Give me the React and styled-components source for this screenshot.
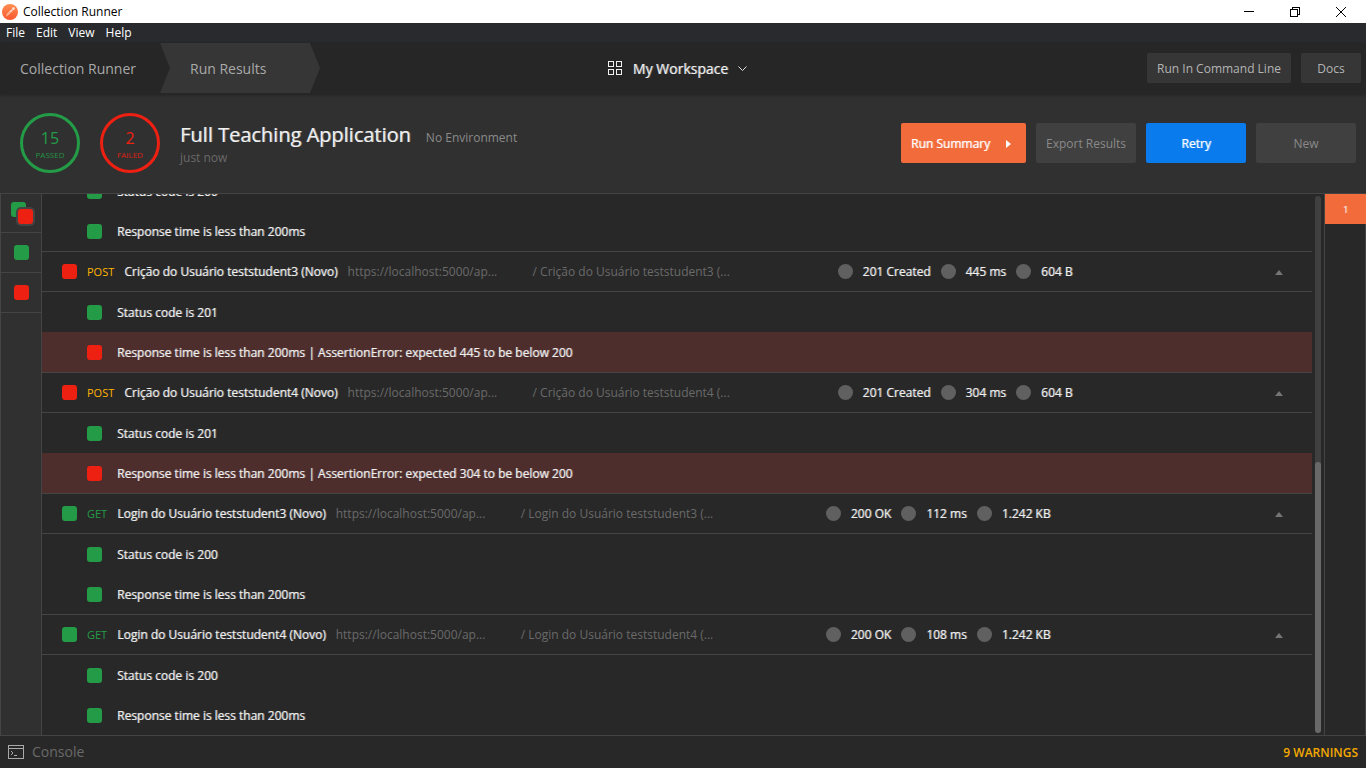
import React from "react";
import styled, { createGlobalStyle, css } from "styled-components";

const GREEN = "#249c47";
const RED = "#ed2012";
const ORANGE = "#f26b3a";
const LINE = "#444444";

const GlobalStyle = createGlobalStyle`
  *, *::before, *::after { box-sizing: border-box; }
  body {
    margin: 0;
    background: #282828;
    color: #f0f0f0;
    font-family: "Open Sans", "Noto Sans", sans-serif;
    font-size: 12px;
    line-height: 20px;
  }
  button { font: inherit; color: inherit; border: 0; padding: 0; background: none; }
  h1, p, ul { margin: 0; padding: 0; font-weight: 400; }
  ul { list-style: none; }
`;

/* Strengthens the regular weight without changing its width. */
const strong = css`
  text-shadow: 1px 0 rgba(255, 255, 255, 0.45);
`;

const Window = styled.div`
  display: flex;
  flex-direction: column;
  height: 100vh;
  overflow: hidden;
`;

const TitleBar = styled.div`
  display: flex;
  align-items: center;
  flex: none;
  height: 23px;
  padding: 0 2px;
  gap: 5px;
  background: #fff;
  color: #000;
`;

const WindowControls = styled.div`
  display: flex;
  margin-left: auto;
`;

const WindowButton = styled.button`
  display: flex;
  align-items: center;
  justify-content: center;
  width: 46px;
  height: 20px;
`;

const MenuBar = styled.nav`
  display: flex;
  flex: none;
  height: 20px;
  padding: 0 6px;
  gap: 11px;
  background: #292a2e;
  color: #fff;
`;

const Header = styled.header`
  display: grid;
  grid-template-columns: 1fr auto 1fr;
  flex: none;
  height: 51px;
  background: #262626;
  box-shadow: 0 1px 3px rgba(0, 0, 0, 0.3);
  z-index: 1;
`;

const Tabs = styled.nav`
  display: flex;
  height: 50px;
  font-size: 14px;
  line-height: 52px;
  color: #a9a9a9;
`;

const Tab = styled.button`
  width: 160px;
  padding-left: ${(p) => (p.$active ? 30 : 20)}px;
  text-align: left;
  background: ${(p) => (p.$active ? "#363636" : "transparent")};
  clip-path: ${(p) =>
    p.$active
      ? "polygon(0 0, calc(100% - 10px) 0, 100% 50%, calc(100% - 10px) 100%, 0 100%, 10px 50%)"
      : "none"};
`;

const Workspace = styled.button`
  display: flex;
  align-items: center;
  gap: 10px;
  padding-right: 11px;
  font-size: 14px;
  color: #f0f0f0;
  ${strong}
`;

const HeaderActions = styled.div`
  display: flex;
  align-items: center;
  justify-content: flex-end;
  gap: 10px;
  padding: 0 5px 2px 0;
`;

const HeaderButton = styled.button`
  min-width: 60px;
  height: 30px;
  padding: 2px 10px 0;
  border-radius: 2px;
  background: #363636;
  color: #b4b4b4;
`;

const Summary = styled.section`
  display: flex;
  align-items: center;
  flex: none;
  height: 99px;
  padding: 0 10px 2px 20px;
  gap: 20px;
  background: #303030;
`;

const Counter = styled.div`
  display: flex;
  flex-direction: column;
  align-items: center;
  width: 60px;
  height: 60px;
  padding-top: 12px;
  border: 3px solid ${(p) => p.$color};
  border-radius: 50%;
  color: ${(p) => p.$color};
`;

const Count = styled.span`
  font-size: 16px;
  line-height: 20px;
`;

const CountLabel = styled.span`
  font-size: 8px;
  line-height: 14px;
  opacity: 0.9;
`;

const Heading = styled.div`
  flex: 1;
`;

const HeadingLine = styled.div`
  display: flex;
  align-items: baseline;
  gap: 15px;
`;

const RunName = styled.h1`
  font-size: 20px;
  line-height: 30px;
  ${strong}
`;

const Environment = styled.span`
  color: #8a8a8a;
`;

const RunTime = styled.p`
  line-height: 16px;
  color: #6a6a6a;
`;

const Actions = styled.div`
  display: flex;
  gap: 10px;
`;

const ActionButton = styled.button`
  display: flex;
  align-items: center;
  justify-content: center;
  gap: 16px;
  min-width: ${(p) => (p.$wide ? 125 : 100)}px;
  height: 40px;
  padding-top: 2px;
  border-radius: 2px;
  background: ${(p) => p.$bg || "#404040"};
  color: ${(p) => (p.$bg ? "#fff" : "#8a8a8a")};
  ${(p) => p.$bg && css`text-shadow: 1px 0 rgba(255, 255, 255, 0.55);`}
`;

const Body = styled.main`
  display: flex;
  flex: 1;
  min-height: 0;
  border: solid ${LINE};
  border-width: 1px 0 0 1px;
`;

const Filters = styled.aside`
  flex: none;
  width: 41px;
  border-right: 1px solid ${LINE};
  background: #303030;
`;

const FilterButton = styled.button`
  display: flex;
  align-items: center;
  justify-content: center;
  width: 40px;
  height: ${(p) => (p.$first ? 39 : 40)}px;
  border-bottom: 1px solid ${LINE};
`;

const Square = styled.span`
  flex: none;
  width: 15px;
  height: 15px;
  border-radius: 3px;
  background: ${(p) => (p.$pass ? GREEN : RED)};
`;

const Stacked = styled.span`
  position: relative;
  width: 20px;
  height: 22px;

  ${Square} {
    position: absolute;
    top: 0;
    left: 0;
  }
  ${Square} + ${Square} {
    top: 7px;
    left: 7px;
    box-shadow: 0 0 0 2px ${LINE};
  }
`;

const Results = styled.div`
  display: flex;
  flex-direction: column;
  justify-content: flex-end;
  flex: 1;
  min-width: 0;
  overflow: hidden;
`;

const Request = styled.div`
  display: flex;
  align-items: center;
  flex: none;
  height: 41px;
  padding: 0 29px 0 20px;
  gap: 10px;
  border: solid ${LINE};
  border-width: 1px 0;
`;

const Method = styled.span`
  font-size: 11px;
  color: ${(p) => (p.$method === "POST" ? "#ffb400" : GREEN)};
`;

const Name = styled.span`
  ${strong}
`;

const Url = styled.span`
  width: 175px;
  color: #6a6a6a;
`;

const Path = styled.span`
  width: 295px;
  color: #6a6a6a;
`;

const Stat = styled.span`
  display: flex;
  align-items: center;
  gap: 10px;
  ${strong}

  &::before {
    content: "";
    width: 15px;
    height: 15px;
    border-radius: 50%;
    background: #606060;
  }
`;

const Collapse = styled.button`
  display: flex;
  margin-left: auto;
  padding-top: 2px;
`;

const Test = styled.li`
  display: flex;
  align-items: center;
  height: 40px;
  padding-left: 45px;
  gap: 15px;
  background: ${(p) => (p.$failed ? "#4e2e2d" : "transparent")};
`;

const TestText = styled.span`
  padding-top: 2px;
  ${strong}
`;

const Scrollbar = styled.div`
  display: flex;
  flex-direction: column;
  justify-content: flex-end;
  flex: none;
  width: 6px;
  margin: 2px 3px;
  border-radius: 3px;
  background: #404040;
`;

const Thumb = styled.div`
  height: calc(50% + 3px);
  border-radius: 3px;
  background: #696969;
`;

const Iterations = styled.aside`
  flex: none;
  width: 42px;
  border: solid ${LINE};
  border-width: 0 1px;
`;

const Iteration = styled.button`
  width: 41px;
  height: 30px;
  padding-top: 2px;
  background: ${ORANGE};
  font-size: 9px;
  ${strong}
`;

const StatusBar = styled.footer`
  display: flex;
  align-items: center;
  justify-content: space-between;
  flex: none;
  height: 33px;
  padding: 0 8px;
  border-top: 1px solid ${LINE};
`;

const ConsoleButton = styled.button`
  display: flex;
  align-items: center;
  gap: 8px;
  font-size: 14px;
  color: #6a6a6a;
`;

const Warnings = styled.span`
  padding-top: 2px;
  font-weight: 600;
  color: #f5aa00;
`;

const okTests = [
  { text: "Status code is 200", pass: true },
  { text: "Response time is less than 200ms", pass: true },
];

const slowTests = (ms) => [
  { text: "Status code is 201", pass: true },
  {
    text: `Response time is less than 200ms | AssertionError: expected ${ms} to be below 200`,
    pass: false,
  },
];

const requests = [
  { method: "POST", name: "Crição do Usuário teststudent3 (Novo)", path: "/ Crição do Usuário teststudent3 (...", stats: ["201 Created", "445 ms", "604 B"], tests: slowTests(445), pass: false },
  { method: "POST", name: "Crição do Usuário teststudent4 (Novo)", path: "/ Crição do Usuário teststudent4 (...", stats: ["201 Created", "304 ms", "604 B"], tests: slowTests(304), pass: false },
  { method: "GET", name: "Login do Usuário teststudent3 (Novo)", path: "/ Login do Usuário teststudent3 (...", stats: ["200 OK", "112 ms", "1.242 KB"], tests: okTests, pass: true },
  { method: "GET", name: "Login do Usuário teststudent4 (Novo)", path: "/ Login do Usuário teststudent4 (...", stats: ["200 OK", "108 ms", "1.242 KB"], tests: okTests, pass: true },
];

function Logo() {
  return (
    <svg width="16" height="16" viewBox="0 0 16 16" aria-hidden="true">
      <defs>
        <linearGradient id="logo" x1="0" y1="0" x2="0" y2="1">
          <stop offset="0" stopColor="#ff8e52" />
          <stop offset="1" stopColor="#f9572f" />
        </linearGradient>
      </defs>
      <circle cx="8" cy="8" r="8" fill="url(#logo)" />
      <path d="M3.700 12.600 5 9.900 9.600 5.300 10.800 6.500 6.200 11.100Z" fill="#ffe3d6" />
      <path d="M4.200 12 8.500 7.700" stroke="#f96a3c" strokeWidth=".6" />
      <circle cx="11.400" cy="4.700" r="1.400" fill="#ffe3d6" />
    </svg>
  );
}

function TestList({ tests }) {
  return (
    <ul>
      {tests.map((t) => (
        <Test key={t.text} $failed={!t.pass}>
          <Square $pass={t.pass} />
          <TestText>{t.text}</TestText>
        </Test>
      ))}
    </ul>
  );
}

export default function App() {
  return (
    <>
      <GlobalStyle />
      <Window>
        <TitleBar>
          <Logo />
          <span>Collection Runner</span>
          <WindowControls>
            <WindowButton aria-label="Minimize">
              <svg width="10" height="10" shapeRendering="crispEdges"><path d="M0 4.500H10" stroke="#000" /></svg>
            </WindowButton>
            <WindowButton aria-label="Restore">
              <svg width="10" height="10" fill="none" stroke="#000" shapeRendering="crispEdges">
                <path d="M.5 2.500h7v7h-7zM2.500 2.500v-2h7v7h-2" />
              </svg>
            </WindowButton>
            <WindowButton aria-label="Close">
              <svg width="10" height="10" stroke="#000" strokeWidth="1"><path d="M0 0 10 10M10 0 0 10" /></svg>
            </WindowButton>
          </WindowControls>
        </TitleBar>
        <MenuBar>
          {["File", "Edit", "View", "Help"].map((m) => <button key={m}>{m}</button>)}
        </MenuBar>
        <Header>
          <Tabs>
            <Tab>Collection Runner</Tab>
            <Tab $active>Run Results</Tab>
          </Tabs>
          <Workspace>
            <svg width="15" height="15" fill="none" stroke="#f0f0f0" shapeRendering="crispEdges">
              <path d="M.5 .5h5v5h-5zM8.500 .5h5v5h-5zM.5 8.500h5v5h-5zM8.500 8.500h5v5h-5z" />
            </svg>
            My Workspace
            <svg width="9" height="6" fill="none" stroke="#e0e0e0"><path d="M.5 .5 4.500 4.500 8.500 .5" /></svg>
          </Workspace>
          <HeaderActions>
            <HeaderButton>Run In Command Line</HeaderButton>
            <HeaderButton>Docs</HeaderButton>
          </HeaderActions>
        </Header>
        <Summary>
          <Counter $color={GREEN}><Count>15</Count><CountLabel>PASSED</CountLabel></Counter>
          <Counter $color={RED}><Count>2</Count><CountLabel>FAILED</CountLabel></Counter>
          <Heading>
            <HeadingLine>
              <RunName>Full Teaching Application</RunName>
              <Environment>No Environment</Environment>
            </HeadingLine>
            <RunTime>just now</RunTime>
          </Heading>
          <Actions>
            <ActionButton $wide $bg={ORANGE}>
              Run Summary
              <svg width="10" height="8" fill="#fff"><path d="M0 0 5 4 0 8z" /></svg>
            </ActionButton>
            <ActionButton>Export Results</ActionButton>
            <ActionButton $bg="#097bed">Retry</ActionButton>
            <ActionButton>New</ActionButton>
          </Actions>
        </Summary>
        <Body>
          <Filters>
            <FilterButton $first aria-label="All tests">
              <Stacked><Square $pass /><Square /></Stacked>
            </FilterButton>
            <FilterButton aria-label="Passed tests"><Square $pass /></FilterButton>
            <FilterButton aria-label="Failed tests"><Square /></FilterButton>
          </Filters>
          <Results>
            <TestList tests={okTests} />
            {requests.map((r) => (
              <React.Fragment key={r.name}>
                <Request>
                  <Square $pass={r.pass} />
                  <Method $method={r.method}>{r.method}</Method>
                  <Name>{r.name}</Name>
                  <Url>https://localhost:5000/ap...</Url>
                  <Path>{r.path}</Path>
                  {r.stats.map((s) => <Stat key={s}>{s}</Stat>)}
                  <Collapse aria-label="Collapse">
                    <svg width="8" height="5" fill="#757575"><path d="M4 0 8 5H0z" /></svg>
                  </Collapse>
                </Request>
                <TestList tests={r.tests} />
              </React.Fragment>
            ))}
          </Results>
          <Scrollbar><Thumb /></Scrollbar>
          <Iterations><Iteration>1</Iteration></Iterations>
        </Body>
        <StatusBar>
          <ConsoleButton>
            <svg width="16" height="14" fill="none" stroke="#a9a9a9" shapeRendering="crispEdges">
              <path d="M.5 .5h15v13H.5zM.5 3.500h15" />
              <path d="M3 6l2 2-2 2M6 10.500h3" shapeRendering="auto" />
            </svg>
            Console
          </ConsoleButton>
          <Warnings>9 WARNINGS</Warnings>
        </StatusBar>
      </Window>
    </>
  );
}
